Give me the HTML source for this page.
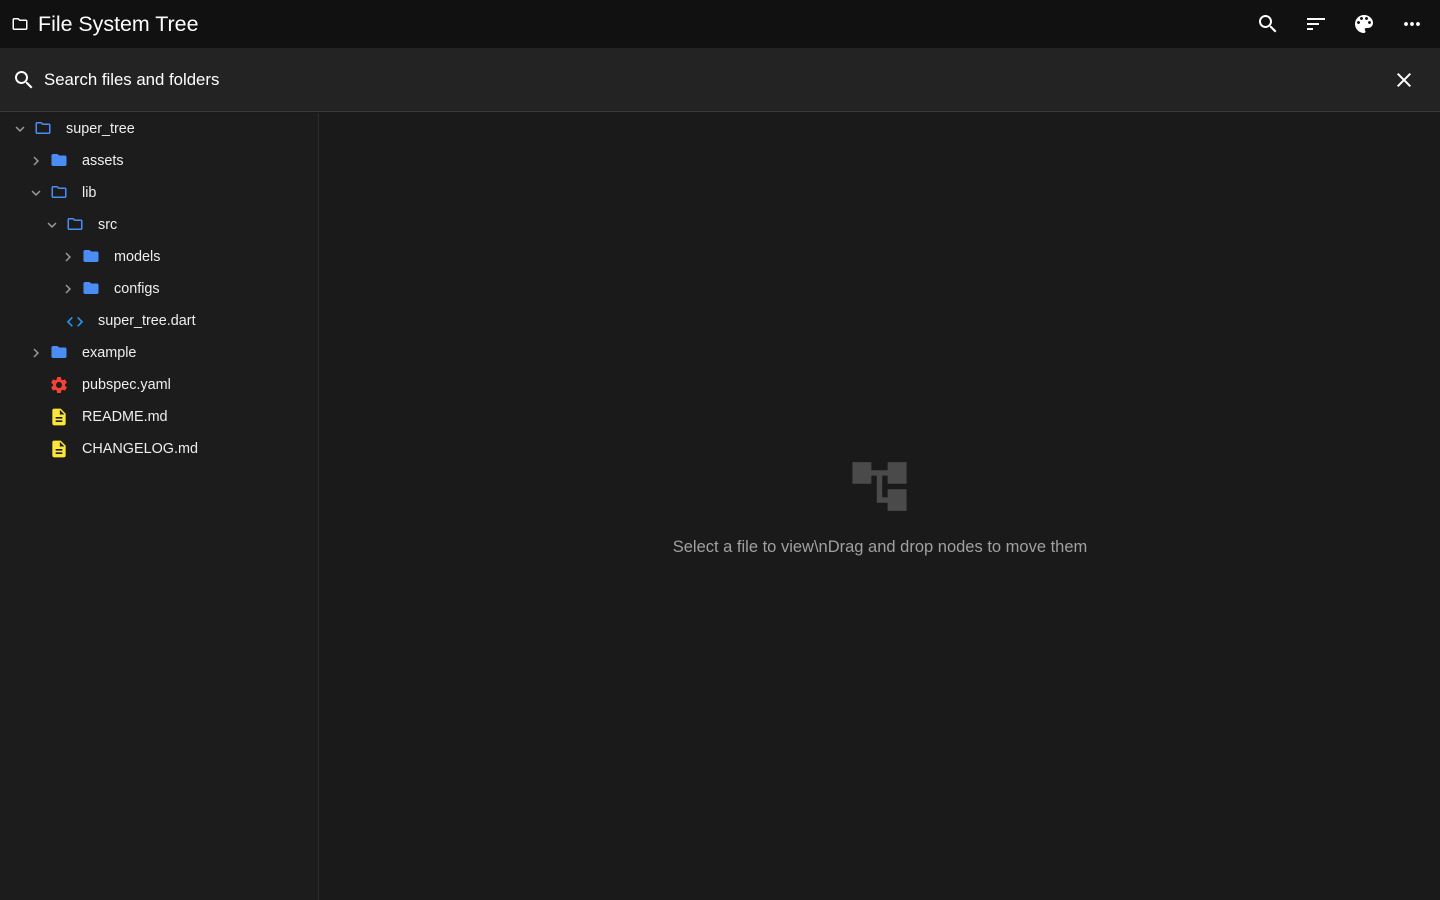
<!DOCTYPE html>
<html><head><meta charset="utf-8"><style>
*{margin:0;padding:0;box-sizing:border-box}
body{width:1440px;height:900px;overflow:hidden;background:#1a1a1a;font-family:"Liberation Sans",Roboto,sans-serif;color:#fff;position:relative}
.top{position:absolute;left:0;top:0;width:1440px;height:48px;background:#111}
.search{position:absolute;left:0;top:48px;width:1440px;height:64px;background:#232323;border-bottom:1px solid #3a3a3a}
.side{position:absolute;left:0;top:113px;width:319px;height:787px;background:#1c1c1c;border-right:1px solid #2c2c2c}
svg{position:absolute}
.t{position:absolute;font-size:14.4px;color:#eee;line-height:16px}
</style></head><body>
<div class="top">
<svg style="left:11px;top:15px" width="18" height="18" viewBox="0 0 24 24" fill="#fff"><path d="M9.17 6l2 2H20v10H4V6h5.17M10 4H4c-1.1 0-1.99.9-1.99 2L2 18c0 1.1.9 2 2 2h16c1.1 0 2-.9 2-2V8c0-1.1-.9-2-2-2h-8l-2-2z"/></svg>
<div style="position:absolute;left:38px;top:12px;font-size:21.4px;line-height:24px;color:#fff">File System Tree</div>
<svg style="left:1256px;top:12px" width="24" height="24" viewBox="0 0 24 24" fill="#fff"><path d="M15.5 14h-.79l-.28-.27C15.41 12.59 16 11.11 16 9.5 16 5.91 13.09 3 9.5 3S3 5.91 3 9.5 5.91 16 9.5 16c1.61 0 3.09-.59 4.23-1.57l.27.28v.79l5 4.99L20.49 19l-4.99-5zm-6 0C7.01 14 5 11.99 5 9.5S7.01 5 9.5 5 14 7.01 14 9.5 11.99 14 9.5 14z"/></svg>
<svg style="left:1304px;top:12px" width="24" height="24" viewBox="0 0 24 24" fill="#fff"><path d="M3 18h6v-2H3v2zM3 6v2h18V6H3zm0 7h12v-2H3v2z"/></svg>
<svg style="left:1352px;top:12px" width="24" height="24" viewBox="0 0 24 24" fill="#fff"><path d="M12 3c-4.97 0-9 4.03-9 9s4.03 9 9 9c.83 0 1.5-.67 1.5-1.5 0-.39-.15-.74-.39-1.01-.23-.26-.38-.61-.38-.99 0-.83.67-1.5 1.5-1.5H16c2.76 0 5-2.24 5-5 0-4.42-4.03-8-9-8zm-5.5 9c-.83 0-1.5-.67-1.5-1.5S5.67 9 6.5 9 8 9.67 8 10.5 7.33 12 6.5 12zm3-4C8.67 8 8 7.33 8 6.5S8.67 5 9.5 5s1.5.67 1.5 1.5S10.33 8 9.5 8zm5 0c-.83 0-1.5-.67-1.5-1.5S13.67 5 14.5 5s1.5.67 1.5 1.5S15.33 8 14.5 8zm3 4c-.83 0-1.5-.67-1.5-1.5S16.67 9 17.5 9s1.5.67 1.5 1.5-.67 1.5-1.5 1.5z"/></svg>
<svg style="left:1400px;top:12px" width="24" height="24" viewBox="0 0 24 24" fill="#fff"><path d="M6 10c-1.1 0-2 .9-2 2s.9 2 2 2 2-.9 2-2-.9-2-2-2zm12 0c-1.1 0-2 .9-2 2s.9 2 2 2 2-.9 2-2-.9-2-2-2zm-6 0c-1.1 0-2 .9-2 2s.9 2 2 2 2-.9 2-2-.9-2-2-2z"/></svg>
</div>
<div class="search">
<svg style="left:12px;top:20px" width="24" height="24" viewBox="0 0 24 24" fill="#fff"><path d="M15.5 14h-.79l-.28-.27C15.41 12.59 16 11.11 16 9.5 16 5.91 13.09 3 9.5 3S3 5.91 3 9.5 5.91 16 9.5 16c1.61 0 3.09-.59 4.23-1.57l.27.28v.79l5 4.99L20.49 19l-4.99-5zm-6 0C7.01 14 5 11.99 5 9.5S7.01 5 9.5 5 14 7.01 14 9.5 11.99 14 9.5 14z"/></svg>
<div style="position:absolute;left:44px;top:22px;font-size:16.8px;line-height:20px;color:#fff">Search files and folders</div>
<svg style="left:1392px;top:20px" width="24" height="24" viewBox="0 0 24 24" fill="#fff"><path d="M19 6.41L17.59 5 12 10.59 6.41 5 5 6.41 10.59 12 5 17.59 6.41 19 12 13.41 17.59 19 19 17.59 13.41 12z"/></svg>
</div>
<div class="side"></div>
<svg width="0" height="0"><defs>
<path id="cr" d="M10 6L8.59 7.41 13.17 12l-4.58 4.59L10 18l6-6z"/>
<path id="cd" d="M16.59 8.59L12 13.170 7.41 8.59 6 10l6 6 6-6z"/>
<path id="fo" d="M9.17 6l2 2H20v10H4V6h5.17M10 4H4c-1.1 0-1.99.9-1.99 2L2 18c0 1.1.9 2 2 2h16c1.1 0 2-.9 2-2V8c0-1.1-.9-2-2-2h-8l-2-2z"/>
<path id="ff" d="M10 4H4c-1.1 0-2 .9-2 2v12c0 1.1.9 2 2 2h16c1.1 0 2-.9 2-2V8c0-1.1-.9-2-2-2h-8l-2-2z"/>
</defs></svg>
<svg style="left:11px;top:120px" width="18" height="18" viewBox="0 0 24 24" fill="#999"><use href="#cd"/></svg>
<svg style="left:34px;top:119px" width="18" height="18" viewBox="0 0 24 24" fill="#4a8ef5"><use href="#fo"/></svg>
<div class="t" style="left:66px;top:121px">super_tree</div>
<svg style="left:27px;top:152px" width="18" height="18" viewBox="0 0 24 24" fill="#999"><use href="#cr"/></svg>
<svg style="left:50px;top:151px" width="18" height="18" viewBox="0 0 24 24" fill="#4a8ef5"><use href="#ff"/></svg>
<div class="t" style="left:82px;top:153px">assets</div>
<svg style="left:27px;top:184px" width="18" height="18" viewBox="0 0 24 24" fill="#999"><use href="#cd"/></svg>
<svg style="left:50px;top:183px" width="18" height="18" viewBox="0 0 24 24" fill="#4a8ef5"><use href="#fo"/></svg>
<div class="t" style="left:82px;top:185px">lib</div>
<svg style="left:43px;top:216px" width="18" height="18" viewBox="0 0 24 24" fill="#999"><use href="#cd"/></svg>
<svg style="left:66px;top:215px" width="18" height="18" viewBox="0 0 24 24" fill="#4a8ef5"><use href="#fo"/></svg>
<div class="t" style="left:98px;top:217px">src</div>
<svg style="left:59px;top:248px" width="18" height="18" viewBox="0 0 24 24" fill="#999"><use href="#cr"/></svg>
<svg style="left:82px;top:247px" width="18" height="18" viewBox="0 0 24 24" fill="#4a8ef5"><use href="#ff"/></svg>
<div class="t" style="left:114px;top:249px">models</div>
<svg style="left:59px;top:280px" width="18" height="18" viewBox="0 0 24 24" fill="#999"><use href="#cr"/></svg>
<svg style="left:82px;top:279px" width="18" height="18" viewBox="0 0 24 24" fill="#4a8ef5"><use href="#ff"/></svg>
<div class="t" style="left:114px;top:281px">configs</div>
<svg style="left:65px;top:312px" width="20" height="18" viewBox="0 0 24 22" fill="#2196f3"><path d="M9.4 16.6L4.8 12l4.6-4.6L8 6l-6 6 6 6 1.4-1.4zm5.2 0l4.6-4.6-4.6-4.6L16 6l6 6-6 6-1.4-1.4z"/></svg>
<div class="t" style="left:98px;top:313px">super_tree.dart</div>
<svg style="left:27px;top:344px" width="18" height="18" viewBox="0 0 24 24" fill="#999"><use href="#cr"/></svg>
<svg style="left:50px;top:343px" width="18" height="18" viewBox="0 0 24 24" fill="#4a8ef5"><use href="#ff"/></svg>
<div class="t" style="left:82px;top:345px">example</div>
<svg style="left:49px;top:375px" width="20" height="20" viewBox="0 0 24 24" fill="#f44336"><path d="M19.14 12.94c.04-.3.06-.61.06-.94 0-.32-.02-.64-.07-.94l2.03-1.58c.18-.14.23-.41.12-.61l-1.92-3.32c-.12-.22-.37-.29-.59-.22l-2.39.96c-.5-.38-1.03-.7-1.62-.94l-.36-2.54c-.04-.24-.24-.41-.48-.41h-3.84c-.24 0-.43.17-.47.41l-.36 2.54c-.59.24-1.130.57-1.62.94l-2.39-.96c-.22-.08-.47 0-.59.22L2.74 8.87c-.12.21-.08.47.12.61l2.03 1.58c-.05.3-.09.63-.09.94s.02.64.07.94l-2.03 1.58c-.18.14-.23.41-.12.61l1.92 3.32c.12.22.37.29.59.22l2.39-.96c.5.38 1.03.7 1.62.94l.36 2.54c.05.24.24.41.48.41h3.84c.24 0 .44-.17.47-.41l.36-2.54c.59-.24 1.13-.56 1.62-.94l2.39.96c.22.08.47 0 .59-.22l1.92-3.32c.12-.22.07-.47-.12-.61l-2.01-1.58zM12 15.6c-1.98 0-3.6-1.62-3.6-3.6s1.62-3.6 3.6-3.6 3.6 1.62 3.6 3.6-1.62 3.6-3.6 3.6z"/></svg>
<div class="t" style="left:82px;top:377px">pubspec.yaml</div>
<svg style="left:49px;top:407px" width="20" height="20" viewBox="0 0 24 24" fill="#fbe53b"><path d="M14 2H6c-1.1 0-1.99.9-1.99 2L4 20c0 1.1.89 2 1.99 2H18c1.1 0 2-.9 2-2V8l-6-6zm2 16H8v-2h8v2zm0-4H8v-2h8v2zm-3-5V3.5L18.5 9H13z"/></svg>
<div class="t" style="left:82px;top:409px">README.md</div>
<svg style="left:49px;top:439px" width="20" height="20" viewBox="0 0 24 24" fill="#fbe53b"><path d="M14 2H6c-1.1 0-1.99.9-1.99 2L4 20c0 1.1.89 2 1.99 2H18c1.1 0 2-.9 2-2V8l-6-6zm2 16H8v-2h8v2zm0-4H8v-2h8v2zm-3-5V3.5L18.5 9H13z"/></svg>
<div class="t" style="left:82px;top:441px">CHANGELOG.md</div>
<svg style="left:847px;top:454px" width="65" height="65" viewBox="0 0 24 24" fill="#4a4a4a"><path d="M22 11V3h-7v3H9V3H2v8h7V8h2v10h4v3h7v-8h-7v3h-2V8h2v3z"/></svg>
<div style="position:absolute;left:320px;width:1120px;top:537px;text-align:center;font-size:16.5px;line-height:20px;color:#a0a0a0">Select a file to view\nDrag and drop nodes to move them</div>
</body></html>
